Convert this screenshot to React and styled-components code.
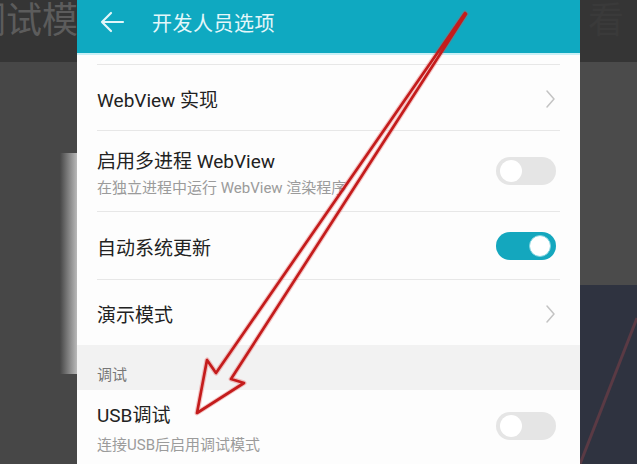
import React from 'react';
import styled, { createGlobalStyle } from 'styled-components';

const GlobalStyle = createGlobalStyle`
  html, body {
    margin: 0;
    padding: 0;
    background: #474747;
  }
  body {
    font-family: Roboto, "Noto Sans CJK SC", sans-serif;
    overflow: hidden;
  }
`;

const Screen = styled.div`
  position: relative;
  display: flex;
  width: 637px;
  height: 464px;
  overflow: hidden;
`;

const Side = styled.div`
  display: flex;
  flex-direction: column;
  flex: none;
  width: ${(p) => p.$w}px;
`;

const Band = styled.div`
  flex: none;
  height: 62px;
  background: #353535;
  overflow: hidden;
  white-space: nowrap;
  font-family: "Noto Sans CJK SC", sans-serif;
  font-size: 36px;
  line-height: 34px;
  color: ${(p) => p.$color || '#5c5c5c'};
  span {
    display: inline-block;
    margin-left: ${(p) => p.$shift || 0}px;
  }
`;

const LeftBody = styled.div`
  flex: 1;
  background: #474747;
  display: flex;
  justify-content: flex-end;
  align-items: flex-start;
  padding-top: 91px;
`;

const Glow = styled.div`
  width: 17px;
  height: 221px;
  background: linear-gradient(to right, rgba(71, 71, 71, 0), #b9b9b9);
`;

const RightMid = styled.div`
  flex: none;
  height: 223px;
  background: #4b4b4b;
`;

const RightLow = styled.div`
  flex: 1;
  background: #2f3340;
  svg {
    display: block;
  }
`;

const Phone = styled.div`
  flex: none;
  width: 503px;
  background: #fdfdfd;
  display: flex;
  flex-direction: column;
`;

const Header = styled.div`
  flex: none;
  height: 55px;
  box-sizing: border-box;
  padding: 0 0 9px 22px;
  background: #0fa9c1;
  border-bottom: 2px solid #c9f0f6;
  display: flex;
  align-items: center;
  gap: 27px;
`;

const Title = styled.div`
  font-family: "Noto Sans CJK SC", sans-serif;
  font-size: 20px;
  color: #e4f7fa;
  letter-spacing: 0.5px;
`;

const Row = styled.div`
  flex: none;
  height: ${(p) => p.$h}px;
  box-sizing: border-box;
  margin: 0 20px;
  border-bottom: ${(p) => (p.$last ? 'none' : '1px solid #e7e7e7')};
  display: flex;
  align-items: center;
  justify-content: space-between;
`;

const Texts = styled.div`
  display: flex;
  flex-direction: column;
  gap: ${(p) => p.$gap || 3}px;
  padding-top: 7px;
`;

const Label = styled.div`
  font-size: 19px;
  line-height: 24px;
  color: #222;
`;

const Sub = styled.div`
  font-size: 15px;
  line-height: 22px;
  color: #9b9b9b;
`;

const Section = styled.div`
  flex: none;
  height: 45px;
  box-sizing: border-box;
  background: #f2f2f2;
  padding: 0 20px 4px;
  display: flex;
  align-items: flex-end;
  font-size: 15px;
  line-height: 22px;
  color: #777;
`;

const Track = styled.div`
  position: relative;
  width: 60px;
  height: 28px;
  margin-right: 4px;
  border-radius: 14px;
  background: ${(p) => (p.$on ? '#14a7be' : '#e5e5e5')};
  &::after {
    content: '';
    position: absolute;
    top: 3px;
    left: ${(p) => (p.$on ? '33px' : '4px')};
    width: 22px;
    height: 22px;
    box-sizing: border-box;
    border-radius: 50%;
    background: #fff;
    border: ${(p) => (p.$on ? '1px solid #7fd3df' : 'none')};
  }
`;

const Overlay = styled.svg`
  position: absolute;
  left: 0;
  top: 0;
  pointer-events: none;
`;

const BackIcon = () => (
  <svg width="26" height="22" viewBox="0 0 26 22">
    <path d="M3 11h21M12 2l-9 9 9 9" fill="none" stroke="#e2f6f9" strokeWidth="2.2" strokeLinecap="round" strokeLinejoin="round" />
  </svg>
);

const Chevron = () => (
  <svg width="12" height="20" viewBox="0 0 12 20" style={{ marginRight: 4, marginTop: 3 }}>
    <path d="M3 2l7 8-7 8" fill="none" stroke="#c3c3c3" strokeWidth="1.5" strokeLinecap="round" strokeLinejoin="round" />
  </svg>
);

const arrow = '465,13 216,373 207,360 197,413 244,383 231,379 466,14';

export default function App() {
  return (
    <>
      <GlobalStyle />
      <Screen>
        <Side $w={77}>
          <Band $shift={-30}>
            <span>调试模</span>
          </Band>
          <LeftBody>
            <Glow />
          </LeftBody>
        </Side>

        <Phone>
          <Header>
            <BackIcon />
            <Title>开发人员选项</Title>
          </Header>
          <Row $h={10} />
          <Row $h={66}>
            <Texts>
              <Label>WebView 实现</Label>
            </Texts>
            <Chevron />
          </Row>
          <Row $h={81}>
            <Texts>
              <Label>启用多进程 WebView</Label>
              <Sub>在独立进程中运行 WebView 渲染程序</Sub>
            </Texts>
            <Track />
          </Row>
          <Row $h={68}>
            <Texts>
              <Label>自动系统更新</Label>
            </Texts>
            <Track $on />
          </Row>
          <Row $h={65} $last>
            <Texts>
              <Label>演示模式</Label>
            </Texts>
            <Chevron />
          </Row>
          <Section>调试</Section>
          <Row $h={72} $last>
            <Texts $gap={6}>
              <Label>USB调试</Label>
              <Sub>连接USB后启用调试模式</Sub>
            </Texts>
            <Track />
          </Row>
        </Phone>

        <Side $w={57}>
          <Band $color="#3a3a3a" $shift={8}>
            <span>看</span>
          </Band>
          <RightMid />
          <RightLow>
            <svg width="57" height="179" viewBox="0 0 57 179">
              <path d="M57 33L0 179" stroke="#5a3a44" strokeWidth="3" />
            </svg>
          </RightLow>
        </Side>

        <Overlay width="637" height="464" viewBox="0 0 637 464">
          <polygon points={arrow} fill="none" stroke="#e04a4a" strokeOpacity="0.3" strokeWidth="5" strokeLinejoin="round" />
          <polygon points={arrow} fill="none" stroke="#c41c1c" strokeWidth="2.7" strokeLinejoin="round" />
        </Overlay>
      </Screen>
    </>
  );
}
